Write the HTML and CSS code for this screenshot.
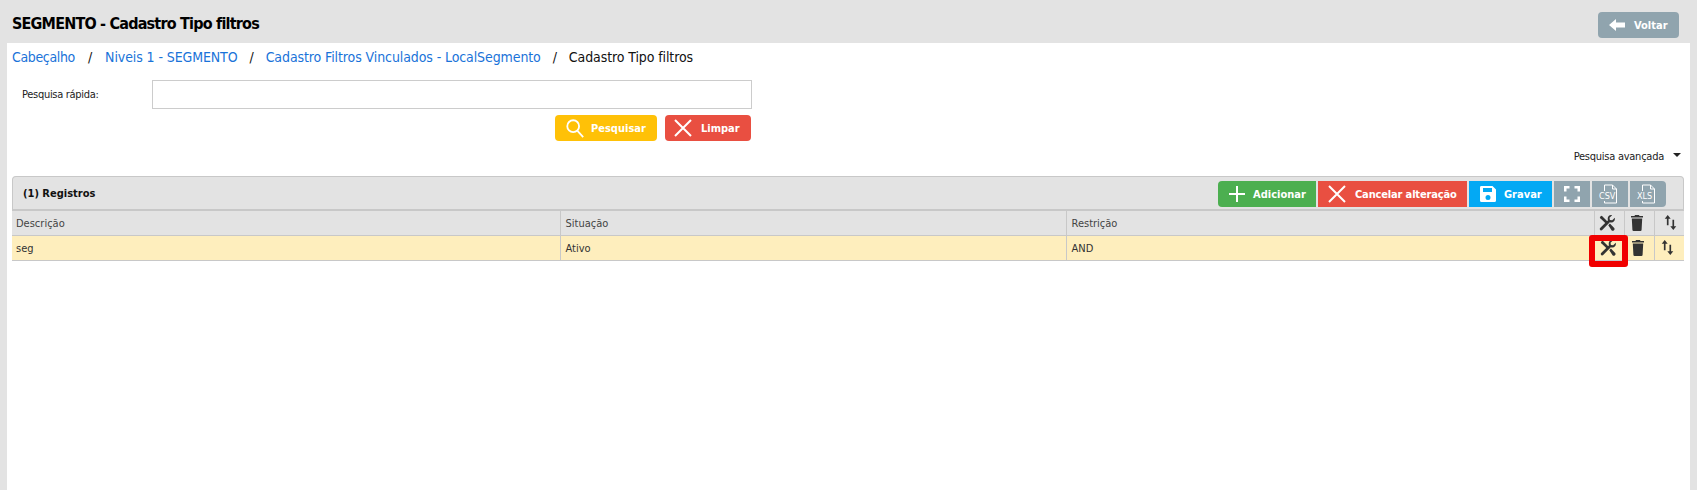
FILE: index.html
```html
<!DOCTYPE html>
<html lang="pt">
<head>
<meta charset="utf-8">
<title>Cadastro Tipo filtros</title>
<link rel="stylesheet" href="styles.css">
</head>
<body>
<svg class="defs" width="0" height="0">
  <symbol id="tools" viewBox="0 0 16 16">
    <path d="M.8 2.200 2.200.8l1.100.5 6.400 6.400-1.900 1.900-6.500-6.400z" fill="#333"/>
    <path d="M9.300 10.200 10.900 8.600l4.300 4.300a1.800 1.800 0 0 1-2.500 2.500z" fill="#333"/>
    <path d="M15.800 2.800 13.200 5.300 10.900 4.900 10.500 2.700 13.100.2C10.700-.4 8.700 1.300 8.700 3.700c0 .6.100 1.100.3 1.500L1.100 13a1.500 1.500 0 0 0 2.100 2.100L10.800 7.200c.5.200 1 .3 1.600.3C15 7.500 16.300 5 15.800 2.800z" fill="#333"/>
  </symbol>
  <symbol id="trash" viewBox="0 0 12 16">
    <path d="M4 0h4l.5 1H12V2.500H0V1H3.500z" fill="#333"/>
    <path d="M.8 3.500h10.400l-.6 11.300A1.200 1.200 0 0 1 9.400 16H2.600a1.200 1.200 0 0 1-1.200-1.200z" fill="#333"/>
  </symbol>
  <symbol id="sort" viewBox="0 0 14 18">
    <path d="M4 1 .8 5h2.300v7h1.800V5h2.300zM10 17l3.200-4h-2.300V6H9.100v7H6.800z" fill="#333"/>
  </symbol>
  <symbol id="search" viewBox="0 0 22 22">
    <circle cx="9" cy="9" r="6.500" fill="none" stroke="#fff" stroke-width="2"/>
    <path d="m13.500 14 6.500 7" fill="none" stroke="#fff" stroke-width="2"/>
  </symbol>
  <symbol id="cross" viewBox="0 0 18 18">
    <path d="m1 1 16 16M17 1 1 17" fill="none" stroke="#fff" stroke-width="2"/>
  </symbol>
  <symbol id="plus" viewBox="0 0 18 18">
    <path d="M9 1v16M1 9h16" fill="none" stroke="#fff" stroke-width="2"/>
  </symbol>
  <symbol id="save" viewBox="0 0 18 18">
    <path fill-rule="evenodd" d="M2 1h11.500L17 4.500V15.500a1.500 1.500 0 0 1-1.500 1.500H2.500A1.500 1.500 0 0 1 1 15.500V2.500A1.500 1.500 0 0 1 2 1zM4 3v4h9V3zm5 7a2.500 2.500 0 1 0 0 5 2.500 2.500 0 0 0 0-5z" fill="#fff"/>
  </symbol>
  <symbol id="full" viewBox="0 0 16 16">
    <path d="M1.250 5.500V1.250h4.250M10.500 1.250h4.250V5.500M14.750 10.500v4.250H10.500M5.500 14.750H1.250V10.500" fill="none" stroke="#fff" stroke-width="2.500"/>
  </symbol>
  <symbol id="file" viewBox="0 0 20 20">
    <path d="M4.500 9V1h8l4 4v14h-12v-2M12.500 1v4h4" fill="none" stroke="#fff" stroke-width="1"/>
  </symbol>
</svg>

<header class="top">
  <h1 class="title">SEGMENTO - Cadastro Tipo filtros</h1>
  <a class="btn btn-slate btn-back"><svg class="arrow" viewBox="0 0 16 12"><path d="M0 6 7 0v3.500h9v5H7V12z" fill="#fff"/></svg>Voltar</a>
</header>

<main class="content">
  <nav class="crumbs">
    <a class="crumb-first">Cabeçalho</a><span class="sep sep-first">/</span>
    <a>Niveis 1 - SEGMENTO</a><span class="sep">/</span>
    <a>Cadastro Filtros Vinculados - LocalSegmento</a><span class="sep">/</span>
    <span class="current">Cadastro Tipo filtros</span>
  </nav>

  <form class="search">
    <div class="search-row">
      <label class="search-label">Pesquisa rápida:</label>
      <input class="search-input" type="text">
    </div>
    <div class="search-actions">
      <a class="btn btn-yellow btn-search"><svg class="ic ic-search"><use href="#search"/></svg>Pesquisar</a>
      <a class="btn btn-red btn-clear"><svg class="ic ic-cross"><use href="#cross"/></svg>Limpar</a>
    </div>
    <div class="advanced">Pesquisa avançada<span class="caret"></span></div>
  </form>

  <section class="panel">
    <div class="panel-head">
      <strong class="count">(1) Registros</strong>
      <div class="tools">
        <a class="btn btn-green tool tool-add"><svg class="ic ic-plus"><use href="#plus"/></svg>Adicionar</a>
        <a class="btn btn-red tool tool-cancel"><svg class="ic ic-cross"><use href="#cross"/></svg>Cancelar alteração</a>
        <a class="btn btn-blue tool tool-save"><svg class="ic ic-save"><use href="#save"/></svg>Gravar</a>
        <a class="btn btn-slate tool tool-icon"><svg class="ic ic-full"><use href="#full"/></svg></a>
        <a class="btn btn-slate tool tool-icon"><svg class="ic ic-file"><use href="#file"/></svg><span class="file-tag">CSV</span></a>
        <a class="btn btn-slate tool tool-icon tool-last"><svg class="ic ic-file"><use href="#file"/></svg><span class="file-tag">XLS</span></a>
      </div>
    </div>
    <table class="grid">
      <colgroup>
        <col class="c-desc"><col class="c-sit"><col class="c-res"><col class="c-act"><col class="c-act"><col class="c-act">
      </colgroup>
      <thead>
        <tr>
          <th>Descrição</th><th>Situação</th><th>Restrição</th>
          <th class="act"><svg class="gi gi-tools head-tools"><use href="#tools"/></svg></th>
          <th class="act"><svg class="gi gi-trash head-trash"><use href="#trash"/></svg></th>
          <th class="act"><svg class="gi gi-sort head-sort"><use href="#sort"/></svg></th>
        </tr>
      </thead>
      <tbody>
        <tr>
          <td>seg</td><td>Ativo</td><td>AND</td>
          <td class="act act-flag"><svg class="gi gi-tools row-tools"><use href="#tools"/></svg><span class="flag"></span></td>
          <td class="act"><svg class="gi gi-trash row-trash"><use href="#trash"/></svg></td>
          <td class="act"><svg class="gi gi-sort row-sort"><use href="#sort"/></svg></td>
        </tr>
      </tbody>
    </table>
  </section>
</main>
</body>
</html>
```
FILE: styles.css
```css
* { box-sizing: border-box; }
html, body { margin: 0; height: 100%; }
body {
  background: #e3e3e3;
  font-family: "DejaVu Sans Condensed", "DejaVu Sans", sans-serif;
  font-size: 11px;
  color: #333;
  overflow: hidden;
  display: flex;
  flex-direction: column;
}
.defs { position: absolute; }
.top {
  height: 43px;
  flex: none;
  display: flex;
  justify-content: space-between;
  padding: 12px 18px 0 12px;
}
.title {
  margin: 3px 0 0;
  font-size: 16px;
  line-height: 18px;
  font-weight: 700;
  color: #000;
  letter-spacing: -.8px;
}
.btn {
  display: flex;
  align-items: center;
  color: #fff;
  font-weight: 700;
  font-size: 11px;
  white-space: nowrap;
}
.btn-slate { background: #90a4ae; }
.btn-yellow { background: #ffc107; }
.btn-red { background: #e94f41; }
.btn-green { background: #4caf50; }
.btn-blue { background: #03a9f4; }
.btn-back {
  width: 81px;
  height: 26px;
  border-radius: 4px;
  padding-left: 11px;
}
.arrow { width: 16px; height: 12px; margin-right: 9px; }
.content {
  flex: 1;
  margin: 0 7px;
  background: #fff;
  padding: 0 6px 0 5px;
}
.crumbs {
  height: 37px;
  display: flex;
  align-items: center;
  font-size: 14px;
  padding-bottom: 10px;
  letter-spacing: -.1px;
  color: #111;
}
.crumbs a { color: #1a73d9; }
.crumbs .crumb-first { letter-spacing: -.35px; }
.sep { margin: 0 12px; }
.sep-first { margin: 0 13px; }
.search { display: block; }
.search-row { display: flex; align-items: center; height: 29px; }
.search-label { width: 140px; padding-left: 10px; color: #222; font-size: 11px; letter-spacing: -.3px; }
.search-input {
  width: 600px;
  height: 29px;
  border: 1px solid #ccc;
  background: #fff;
  margin: 0;
}
.search-actions {
  display: flex;
  gap: 8px;
  width: 739px;
  justify-content: flex-end;
  margin-top: 6px;
}
.search-actions .btn { height: 26px; border-radius: 4px; }
.btn-search { width: 102px; padding-left: 10px; }
.btn-clear { width: 86px; padding-left: 9px; }
.ic { flex: none; }
.ic-search { width: 20px; height: 20px; margin-right: 6px; }
.ic-cross { width: 18px; height: 18px; margin-right: 9px; }
.ic-plus { width: 18px; height: 18px; margin-right: 7px; }
.ic-save { width: 18px; height: 18px; margin-right: 7px; }
.ic-full { width: 16px; height: 16px; }
.ic-file { width: 20px; height: 20px; }
.advanced {
  display: flex;
  justify-content: flex-end;
  align-items: center;
  height: 19px;
  margin-top: 6px;
  padding-right: 3px;
  color: #222;
  font-size: 11px;
  letter-spacing: -.25px;
}
.caret {
  width: 0;
  height: 0;
  margin: 0 0 3px 9px;
  border: 4px solid transparent;
  border-top-color: #222;
  border-bottom: 0;
}
.panel { margin-top: 10px; }
.panel-head {
  height: 35px;
  display: flex;
  justify-content: space-between;
  align-items: flex-start;
  background: #e3e3e3;
  border: 1px solid #c8c8c8;
  border-bottom-width: 2px;
  border-radius: 4px 4px 0 0;
  padding: 4px 17px 0 10px;
}
.count { margin-top: 6px; color: #111; font-size: 11px; }
.tools { display: flex; gap: 2px; }
.tool { height: 26px; }
.tool-add { width: 98px; padding-left: 10px; border-radius: 4px 0 0 4px; }
.tool-cancel { width: 149px; padding-left: 10px; letter-spacing: -.15px; }
.tool-save { width: 83px; padding-left: 10px; }
.tool-icon { width: 36px; justify-content: center; position: relative; }
.tool-last { border-radius: 0 4px 4px 0; }
.file-tag {
  position: absolute;
  left: 7px;
  top: 10px;
  font-size: 9px;
  font-weight: 400;
  background: #90a4ae;
  line-height: 10px;
}
.grid {
  width: 100%;
  border-collapse: collapse;
  table-layout: fixed;
}
.c-desc { width: 548px; }
.c-sit { width: 506px; }
.c-res { width: 528px; }
.c-act { width: 30px; }
.grid th, .grid td {
  padding: 1px 4px 0 5px;
  text-align: left;
  font-weight: 400;
  font-size: 11px;
  color: #444;
  border: 1px solid #c8c8c8;
  border-width: 0 1px 1px 1px;
}
.grid th { height: 24px; background: #e3e3e3; }
.grid td { height: 25px; background: #feeebd; color: #333; }
.grid th:first-child, .grid td:first-child { border-left: 0; padding-left: 4px; }
.grid th:last-child, .grid td:last-child { border-right: 0; }
.grid .act { padding: 0; text-align: center; }
.act-flag { position: relative; }
.flag {
  position: absolute;
  left: -6px;
  top: -1px;
  width: 39px;
  height: 32px;
  border: 6px solid #f00000;
  border-radius: 3px;
}
.gi { display: inline-block; vertical-align: middle; }
.gi-tools { width: 16px; height: 16px; }
.gi-trash { width: 12px; height: 16px; }
.gi-sort { width: 13px; height: 17px; }
.head-tools { margin-right: 4px; }
.row-tools { margin-right: 2px; }
.head-trash { margin-right: 5px; }
.head-sort { margin-left: 2px; }
.row-trash { margin-right: 3px; }
.row-sort { margin-right: 3px; }
```
